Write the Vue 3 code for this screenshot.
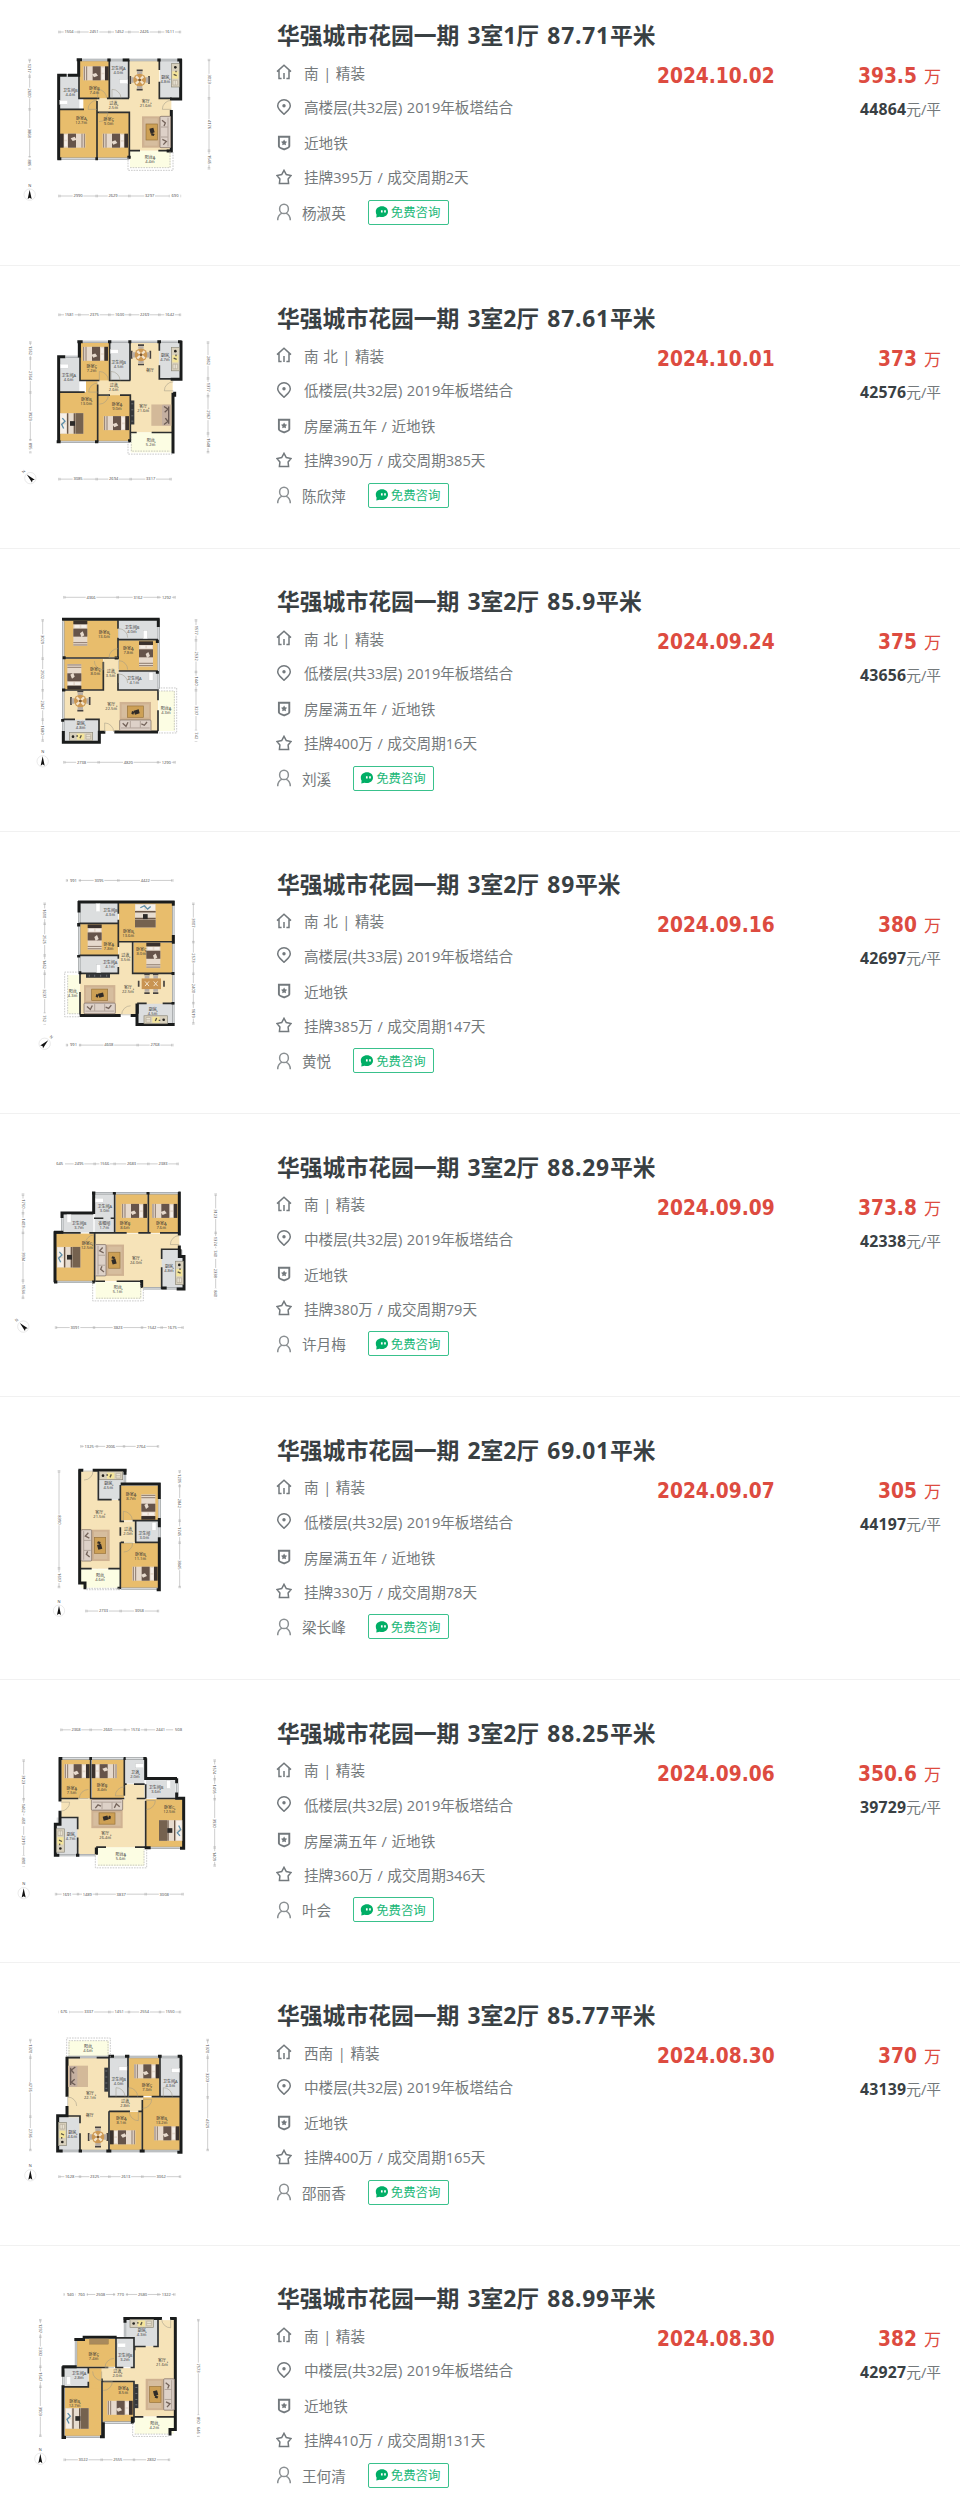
<template>
  <ul class="deal-list">
    <li v-for="(item, i) in deals" :key="i" class="deal">
      <svg class="plan" width="250" height="240" :viewBox="`0 ${-item.plan.dy} 750 720`">
        <rect
          v-for="(r, k) in item.plan.rooms"
          :key="'r' + k"
          :class="r[0]"
          :x="r[1]"
          :y="r[2]"
          :width="r[3]"
          :height="r[4]"
        />
        <path class="glass-edge" :d="item.plan.glass" />
        <path class="glass" :d="item.plan.glass" />
        <path class="thin" :d="item.plan.thin" />
        <path class="solid" :d="item.plan.solid" />
        <path class="dashed" :d="item.plan.dashed" />

        <g
          v-for="(f, k) in item.plan.items"
          :key="'f' + k"
          :transform="`translate(${f[1]} ${f[2]}) rotate(${f[3] || 0})`"
        >
          <template v-if="f[0] === 'bed'">
            <rect x="-38" y="-21" width="66" height="42" fill="#e6d9cc" />
            <path d="M-35-21v42M-28-21v42" stroke="#8d7a6c" stroke-width="3" />
            <rect x="-10" y="-21" width="24" height="42" fill="#66544a" />
            <path d="M-12 3l12-4 6 8-12 5z" fill="#e6d9cc" />
            <path d="M17-17h8v15h-8zM17 3h8v15h-8z" fill="#f5eee7" />
            <rect x="27" y="-21" width="11" height="42" fill="#3a312d" />
          </template>
          <template v-else-if="f[0] === 'big'">
            <rect x="-35" y="-31" width="70" height="62" fill="#e7dccf" />
            <rect x="-35" y="-31" width="24" height="62" fill="#75624f" />
            <path d="M-8-31v62M12-31v62" stroke="#6b5849" stroke-width="4" />
            <rect x="-10" y="-7" width="15" height="14" fill="#2c2a28" />
            <path d="M17-29h16v26h-16zM17 3h16v26h-16z" fill="#f6f0e9" />
            <path d="M24-15l6 12-10 10 8 9" stroke="#5e8ea8" stroke-width="4" fill="none" />
          </template>
          <template v-else-if="f[0] === 'lounge'">
            <rect x="-43" y="-47" width="86" height="94" fill="#cfb292" />
            <rect x="-36" y="-41" width="40" height="82" fill="#d6bd9e" />
            <rect x="-31" y="-24" width="34" height="48" fill="#cda055" stroke="#97723a" stroke-width="2" />
            <path d="M-21-10l12-3 4 14-12 4zM-14 3l9 3-3 6-8-2z" fill="#302b27" />
            <rect x="11" y="-47" width="32" height="94" rx="3" fill="#ddd1c8" stroke="#75665d" stroke-width="2" />
            <path d="M14-15h20M14 15h20M35-43v86" stroke="#9c8c82" stroke-width="2" />
            <path d="M17-35l10 8-4 9M18 22l12 6-9 10" stroke="#75655c" stroke-width="4" fill="none" />
          </template>
          <template v-else-if="f[0] === 'sofa'">
            <rect x="-30" y="-32" width="60" height="64" fill="#d3b999" />
            <rect x="2" y="-31" width="25" height="62" rx="3" fill="#c4afa0" />
            <path d="M8-26l12 8-10 9M8 28l12-9-8-10M22-26v52" stroke="#6b5b54" stroke-width="4" fill="none" />
          </template>
          <template v-else-if="f[0] === 'dining'">
            <path d="M-9-29H9M-9 29H9M-28-12v24M28-12v24" stroke="#45413f" stroke-width="5" />
            <path d="M-8-22H8M-8 22H8M-22-8V8M22-8V8" stroke="#b8afa7" stroke-width="8" />
            <circle r="19" fill="#cc9853" />
            <path d="M-11-11l8 8M11-11l-8 8M-11 11l8-8M11 11l-8-8" stroke="#f3e4cc" stroke-width="7" />
            <circle r="4" fill="#775733" />
          </template>
          <template v-else-if="f[0] === 'table'">
            <path d="M-38-9V9M38-9V9M-21-28h16M5-28h16M-21 28h16M5 28h16" stroke="#45413f" stroke-width="5" />
            <path d="M-13-24v9M13-24v9M-13 24v-9M13 24v-9" stroke="#b8afa7" stroke-width="14" />
            <rect x="-29" y="-16" width="58" height="32" fill="#c99452" />
            <path d="M-19-7l12 14M-7-7l-12 14M7-7l12 14M19-7l-12 14" stroke="#f3e4cc" stroke-width="3" />
          </template>
          <template v-else-if="f[0] === 'stove'">
            <rect x="-12" y="-35" width="24" height="70" fill="#d9d1bd" stroke="#8b8778" stroke-width="2" />
            <rect x="-9" y="-12" width="18" height="22" fill="#f4e59a" />
            <circle cx="0" cy="-24" r="4" fill="#24221e" />
            <path d="M-5-3l9 4M2-14v5" stroke="#5b5548" stroke-width="4" />
            <path d="M-7 15H7v14H-7zM0 15v14" stroke="#b3ab98" stroke-width="2" fill="#e8e2d2" />
          </template>
          <rect v-else-if="f[0] === 'wc'" x="-12" y="-6" width="24" height="12" fill="#fff" stroke="#c6c8c8" />
          <template v-else-if="f[0] === 'tv'">
            <rect x="-6" y="-36" width="12" height="72" fill="#35373a" />
            <path d="M-3-26h6M-3-8h6M-3 10h6M-3 26h6" stroke="#6d7074" stroke-width="3" />
          </template>
          <rect v-else-if="f[0] === 'desk'" x="-28" y="-8" width="56" height="16" fill="#a98a5c" stroke="#84683f" />
          <path v-else-if="f[0] === 'door'" class="door" d="M0 0V-27A27 27 0 0 1 27 0" />
          <template v-else-if="f[0] === 'north'">
            <circle r="17" fill="#fff" stroke="#d5d5d5" stroke-width="1.5" />
            <path d="M0-15L6 13 0 9-6 13z" fill="#111" />
            <text class="dim" y="-24">N</text>
          </template>
        </g>

        <text v-for="(t, k) in item.plan.labels" :key="'t' + k" class="room">
          <tspan :x="t[0]" :y="t[1]">{{ t[2] }}</tspan>
          <tspan :x="t[0]" :y="t[1] + 12">{{ t[3] }}</tspan>
        </text>

        <g v-for="(d, k) in rulers(item.plan)" :key="'d' + k" :transform="d.transform">
          <path class="rule" :d="d.path" />
          <g v-for="(m, n) in d.marks" :key="n">
            <rect :x="m.x - 16" y="-6" width="32" height="12" fill="#fff" />
            <text class="dim" :x="m.x" y="4">{{ m.text }}</text>
          </g>
        </g>
      </svg>

      <div class="info">
        <h3 class="title">
          华强城市花园一期 {{ item.type }} <span class="area">{{ item.area }}</span>平米
        </h3>
        <div class="line line-house">
          <svg class="icon" viewBox="0 0 16 16">
            <path d="M1 7.6 8 1.3l7 6.3M3 6.2v8.3h2.6M13 6.2v8.3h-2.6M8 9v6" />
          </svg>
          <span>{{ item.face }} | 精装</span>
        </div>
        <div class="line line-floor">
          <svg class="icon" viewBox="0 0 16 16">
            <path d="M8 15.3C5.5 12.6 1.7 10 1.7 6.7a6.3 5.9 0 0 1 12.6 0c0 3.3-3.8 5.9-6.3 8.6z" />
            <circle class="fill" cx="8" cy="6.8" r="1.7" />
          </svg>
          <span>{{ item.floor }}层) 2019年板塔结合</span>
        </div>
        <div class="line line-tag">
          <svg class="icon" viewBox="0 0 16 16">
            <path d="M2.9 1.8h10.4v9.4c0 1.4-3.1 2.5-5.2 3.2-2.1-.7-5.2-1.8-5.2-3.2z" stroke-width="1.9" />
            <path class="fill" d="m8.1 4.4 1 1.9 2.1.4-1.5 1.5.3 2.1-1.9-.9-1.9.9.3-2.1L5 6.7l2.1-.4z" />
          </svg>
          <span>{{ item.tag }}</span>
        </div>
        <div class="line line-deal">
          <svg class="icon" viewBox="0 0 16 16">
            <path d="m8 1.3 2.3 4.2 4.8 1-3 3.6.5 4.5H3.400l.5-4.500-3-3.600 4.800-1z" />
          </svg>
          <span>挂牌{{ item.listed }}万 / 成交周期{{ item.days }}天</span>
        </div>
        <div class="line line-agent">
          <svg class="icon pale" viewBox="0 0 16 18">
            <ellipse cx="8" cy="5.9" rx="4.4" ry="4.7" />
            <path d="M1.7 17.3c0-4 1.9-6.2 4.400-7.200M14.300 17.300c0-4-1.900-6.200-4.400-7.200" />
          </svg>
          <span class="agent">{{ item.agent }}</span>
          <a class="ask">
            <svg viewBox="0 0 14 14">
              <path d="M7 1.2c3.600 0 6 2.300 6 5.400s-2.400 5.500-6 5.500c-.9 0-1.700 0-2.400-.3L1.300 12.600l.3-2.800C1 9 .8 7.900.8 6.600.8 3.500 3.400 1.200 7 1.200z" fill="#00ae66" />
              <path d="M6.800 5.200v2.200M10 5.200v2.200" stroke="#fff" stroke-width="1.7" />
            </svg>
            免费咨询
          </a>
        </div>
      </div>

      <div class="date">{{ item.date }}</div>
      <div class="price">
        <div class="total"><b>{{ item.total }}</b> 万</div>
        <div class="unit"><b>{{ item.unit }}</b>元/平</div>
      </div>
    </li>
  </ul>
</template>

<script setup>
// rooms: [kind, x, y, w, h], items: [kind, cx, cy, angle], labels: [x, y, name, size]
// top / bottom / left / right: [offset, stops, lengths]
const plans = [
  {
    dy: 0,
    rooms: [
      ['hall', 388, 180, 90, 272], ['hall', 476, 297, 38, 155], ['hall', 290, 295, 100, 43],
      ['wood', 237, 180, 92, 115], ['tile', 330, 180, 57, 115], ['tile', 480, 180, 62, 115],
      ['tile', 178, 230, 60, 98], ['wood', 178, 328, 113, 147], ['wood', 250, 297, 41, 33],
      ['wood', 291, 337, 97, 138], ['balcony', 390, 453, 122, 50],
    ],
    glass: 'M246 180H542M182 476H388M200 226H236',
    thin: 'M237 180V295H298M328 180V295H387M386 180V295M478 180V210M478 245V295H515M178 328H252M291 303V475M291 337H388V475M390 452H420M475 452H515M321 295H335',
    solid: 'M230 179H246M236 178V230M236 226H204M200 226H176V479M172 476H184M322 180H332M368 180H388M472 180H482M532 180H546M542 178V297H510M514 330V453H500M286 476H294M382 472H392',
    dashed: 'M384 472V511H519V453M390 503H510V453',
    items: [
      ['bed', 288, 220], ['wc', 371, 245], ['dining', 419, 240], ['stove', 526, 226], ['wc', 191, 307],
      ['bed', 218, 422, 180], ['bed', 346, 422], ['lounge', 469, 396], ['door', 293, 295], ['door', 336, 295],
      ['door', 514, 328, 270], ['door', 291, 328, 270], ['door', 297, 338, 90], ['north', 89, 584],
    ],
    labels: [
      [283, 270, '卧室B', '7.4㎡'], [355, 210, '卫生间A', '4.0㎡'], [496, 236, '厨房', '4.8㎡'],
      [211, 276, '卫生间B', '4.4㎡'], [340, 315, '过道', '2.5㎡'], [437, 310, '客厅', '21.6㎡'],
      [244, 359, '卧室A', '12.7㎡'], [326, 363, '卧室C', '9.0㎡'], [450, 476, '阳台A', '4.4㎡'],
    ],
    top: [96, [178, 236, 328, 388, 478, 540], [1504, 2451, 1452, 2426, 1611]],
    bottom: [588, [178, 290, 388, 510, 540], [2990, 2629, 3297, 690]],
    left: [89, [180, 230, 328, 472, 505], [1217, 2600, 3868, 885]],
    right: [627, [180, 295, 452, 505], [3023, 4176, 1545]],
  },
  {
    dy: 21.4,
    rooms: [
      ['hall', 391, 157, 87, 270], ['hall', 476, 268, 42, 159], ['hall', 294, 270, 100, 45],
      ['wood', 240, 157, 90, 114], ['tile', 331, 157, 58, 114], ['tile', 478, 157, 64, 110],
      ['tile', 178, 200, 60, 106], ['wood', 178, 306, 115, 149], ['wood', 258, 273, 35, 35],
      ['wood', 294, 315, 97, 139], ['balcony', 392, 427, 124, 60],
    ],
    glass: 'M247 155H540M182 455H390M198 200H236',
    thin: 'M240 155V271H298M329 155V271H391M390 155V271M478 155V182M478 225V266H515M178 306H254M293 283V455M293 315H330M360 315H391V454M392 427H410M455 427H518',
    solid: 'M232 155H248M238 152V202M196 200H176V458M170 455H182M324 155H334M385 155H394M472 155H483M534 155H545M543 152V267H512M524 305V320M519 308V490M285 455H295M384 452H393',
    dashed: 'M384 453V492H517M394 430V483H510',
    items: [
      ['bed', 286, 191], ['wc', 343, 184], ['dining', 423, 194], ['stove', 526, 207], ['wc', 193, 228],
      ['big', 215, 400, 180], ['bed', 349, 399], ['tv', 397, 367], ['sofa', 484, 375], ['door', 298, 271],
      ['door', 333, 271], ['door', 520, 302, 270], ['door', 293, 306, 270], ['door', 298, 315, 90], ['north', 91, 564, 315],
    ],
    labels: [
      [275, 234, '卧室C', '7.2㎡'], [356, 223, '卫生间B', '4.5㎡'], [495, 202, '厨房', '4.7㎡'],
      [206, 261, '卫生间A', '4.6㎡'], [341, 290, '过道', '2.6㎡'], [450, 246, '餐厅', ''], [430, 355, '客厅', '21.6㎡'],
      [259, 334, '卧室B', '13.0㎡'], [351, 349, '卧室A', '9.0㎡'], [452, 455, '阳台', '5.2㎡'],
    ],
    top: [74, [178, 238, 328, 390, 478, 540], [1581, 2375, 1600, 2269, 1642]],
    bottom: [567, [178, 290, 392, 512], [3085, 2694, 3317]],
    left: [91, [157, 205, 307, 450, 486], [1262, 2764, 3929, 895]],
    right: [624, [157, 265, 318, 430, 486], [2862, 1377, 2967, 1548]],
  },
  {
    dy: 12.9,
    rooms: [
      ['hall', 190, 360, 284, 122], ['hall', 310, 263, 46, 100], ['wood', 190, 150, 164, 112],
      ['tile', 356, 150, 117, 57], ['wood', 357, 210, 116, 92], ['wood', 190, 265, 119, 94],
      ['tile', 356, 305, 117, 53], ['tile', 190, 448, 106, 65], ['balcony', 475, 362, 50, 120],
    ],
    glass: 'M190 153V515M476 170V355',
    thin: 'M354 150V175M354 202V263H312M190 263H315M354 208H474M356 302H474M310 275V359H190M354 310V359H474V390M474 420V483M190 447H225M256 447H297V485',
    solid: 'M186 147H479M475 145V170M188 262H197M186 359H196M344 263H356M472 208V218M472 302V310M188 446V454M190 482V516H298V486H316M343 485H474',
    dashed: 'M474 353H530V488H475M475 362H523V483',
    items: [
      ['bed', 241, 189, 270], ['wc', 436, 193, 90], ['bed', 438, 251, 270], ['bed', 223, 319, 90], ['wc', 453, 318, 90],
      ['dining', 241, 392], ['lounge', 406, 438, 90], ['stove', 243, 499, 270], ['door', 354, 262, 270], ['door', 356, 202],
      ['door', 356, 298], ['door', 310, 272, 180], ['door', 314, 485], ['door', 356, 338], ['north', 128, 573],
    ],
    labels: [
      [312, 190, '卧室B', '13.6㎡'], [396, 175, '卫生间B', '4.0㎡'], [385, 239, '卧室A', '7.8㎡'],
      [286, 302, '卧室C', '8.0㎡'], [332, 309, '过道', '3.5㎡'], [403, 329, '卫生间A', '4.1㎡'],
      [334, 408, '客厅', '22.5㎡'], [242, 465, '厨房', '4.8㎡'], [498, 418, '阳台A', '4.3㎡'],
    ],
    top: [81, [193, 353, 475, 524], [4366, 3162, 1292]],
    bottom: [576, [193, 296, 474, 524], [2738, 4820, 1290]],
    left: [128, [150, 265, 360, 448, 511], [3029, 2502, 2347, 1680]],
    right: [588, [150, 210, 305, 360, 482, 511], [1577, 2532, 1440, 3237, 742]],
  },
  {
    dy: 4.3,
    rooms: [
      ['hall', 239, 370, 282, 121], ['hall', 355, 275, 44, 100], ['tile', 239, 158, 116, 59],
      ['wood', 357, 158, 163, 115], ['wood', 239, 221, 115, 94], ['tile', 239, 317, 116, 50],
      ['wood', 401, 276, 119, 92], ['tile', 413, 460, 108, 60], ['balcony', 203, 374, 36, 116],
    ],
    glass: 'M238 160V370M520 166V520',
    thin: 'M355 156V190M355 208V274H520M238 219H355V290M238 315H355V325M355 350V369H240V400M398 275V369H520M398 305V320M240 425V492M414 490V459H440M488 459H522',
    solid: 'M234 155H524M237 152V186M236 218V228M520 152V166M520 254V280M236 314V321M236 367H244M519 365V374M239 495H362M392 495H411V522H524M411 459V524M519 455V462',
    dashed: 'M238 365H194V499H240M203 374V490H238',
    items: [
      ['wc', 294, 172, 90], ['big', 436, 196, 270], ['bed', 284, 260, 270], ['wc', 296, 355, 90], ['bed', 460, 315, 270],
      ['tv', 294, 376, 90], ['table', 454, 400], ['lounge', 299, 447, 90], ['stove', 467, 508, 90], ['door', 392, 493, 270],
      ['north', 134, 580, 45],
    ],
    labels: [
      [331, 184, '卫生间B', '4.3㎡'], [385, 249, '卧室B', '13.6㎡'], [326, 287, '卧室A', '7.8㎡'], [376, 320, '过道', '3.5㎡'],
      [424, 303, '卧室C', '8.0㎡'], [330, 341, '卫生间A', '4.1㎡'], [384, 415, '客厅', '22.5㎡'], [458, 481, '厨房', '4.5㎡'],
      [218, 428, '阳台', '4.3㎡'],
    ],
    top: [90, [201, 239, 355, 517], [991, 3095, 4422]],
    bottom: [584, [201, 240, 413, 517], [991, 4608, 2768]],
    left: [134, [160, 220, 315, 370, 490, 519], [1610, 2525, 1462, 3237, 752]],
    right: [580, [160, 275, 370, 458, 519], [3107, 2573, 2400, 1619]],
  },
  {
    dy: -4.3,
    rooms: [
      ['hall', 285, 309, 253, 143], ['hall', 425, 450, 60, 24], ['tile', 284, 190, 60, 118], ['wood', 347, 190, 96, 117],
      ['wood', 447, 190, 91, 117], ['tile', 190, 252, 90, 54], ['wood', 168, 309, 115, 146],
      ['tile', 485, 358, 63, 115], ['balcony', 287, 455, 138, 50],
    ],
    glass: 'M282 188H538M187 250V305M170 454H284M430 473H548',
    thin: 'M282 188V250M344 188V307M282 263H310M332 263H344M445 188V307M282 307H380M415 307H452M480 307H540M168 307H242M268 307H284V455M485 385V356H540M485 410V475M287 452H315M350 452H425V472',
    solid: 'M276 187H286M281 185V250M343 184V192M444 184V192M535 187H542M538 184V315M186 262V247H280M162 305H190M165 302V455M162 454H172M538 345V378H552V475H530M540 356V378M425 448V470M484 472H500M276 454H284',
    dashed: 'M278 453V511H430V473M288 503H422V458',
    items: [
      ['wc', 298, 209], ['bed', 403, 241], ['bed', 494, 241], ['wc', 207, 264, 90], ['big', 206, 380, 180],
      ['lounge', 329, 389, 180], ['stove', 538, 427], ['door', 538, 342, 270], ['door', 283, 340, 270], ['north', 70, 588, 315],
    ],
    labels: [
      [314, 231, '卫生间A', '3.0㎡'], [313, 283, '衣帽间', '1.7㎡'], [375, 283, '卧室B', '8.6㎡'], [484, 283, '卧室A', '7.6㎡'],
      [237, 283, '卫生间B', '3.7㎡'], [261, 343, '卧室C', '12.5㎡'], [408, 387, '客厅', '24.0㎡'], [507, 413, '厨房', '4.8㎡'],
      [353, 475, '阳台', '5.1㎡'],
    ],
    top: [100, [168, 190, 284, 344, 445, 533], [645, 2495, 1566, 2683, 2383]],
    bottom: [591, [168, 282, 426, 485, 548], [3091, 3823, 1542, 1675]],
    left: [69, [192, 248, 307, 450, 502], [1750, 1403, 3934, 1534]],
    right: [647, [192, 307, 358, 380, 476, 502], [3123, 1374, 740, 2338, 840]],
  },
  {
    dy: 17.1,
    rooms: [
      ['hall', 243, 152, 50, 292], ['hall', 290, 238, 72, 206], ['hall', 360, 302, 46, 64], ['tile', 297, 152, 77, 85],
      ['wood', 363, 195, 112, 104], ['tile', 407, 302, 68, 60], ['wood', 363, 367, 112, 135], ['balcony', 243, 446, 118, 55],
    ],
    glass: 'M375 155V190M479 234V350M363 504H478',
    thin: 'M295 152V237H335M355 237H361M361 193V302H372M398 300H480M361 320V345M362 365H372M405 365H480M407 302V365M361 365V505M243 444H275M325 444H361',
    solid: 'M235 149H250M278 149H380M375 147V162M362 190H482M478 187V235M478 292V320M478 350V507H470M239 148V487H255V506M357 498V506',
    dashed: 'M258 503H360M259 507H360',
    items: [
      ['stove', 333, 165, 270], ['bed', 445, 259, 90], ['wc', 462, 317, 90], ['lounge', 286, 374, 180], ['bed', 435, 459],
      ['door', 252, 151, 90], ['door', 370, 299], ['door', 371, 367, 90], ['north', 177, 570],
    ],
    labels: [
      [325, 193, '厨房', '4.5㎡'], [393, 226, '卧室A', '8.7㎡'], [298, 281, '客厅', '21.5㎡'], [384, 330, '过道', '2.0㎡'],
      [433, 342, '卫生间', '3.0㎡'], [421, 407, '卧室B', '11.1㎡'], [300, 469, '阳台', '4.6㎡'],
    ],
    top: [77, [244, 291, 372, 474], [1325, 2006, 2764]],
    bottom: [571, [259, 362, 474], [2733, 3058]],
    left: [177, [152, 443, 499], [8390, 1617]],
    right: [539, [152, 196, 300, 366, 499], [1205, 2842, 1745, 3845]],
  },
  {
    dy: 8.5,
    rooms: [
      ['hall', 184, 295, 250, 145], ['hall', 375, 250, 58, 50], ['hall', 235, 438, 55, 25], ['wood', 184, 176, 87, 117],
      ['wood', 276, 176, 97, 117], ['tile', 376, 176, 57, 72], ['tile', 438, 238, 89, 55], ['wood', 437, 295, 112, 146],
      ['tile', 170, 350, 62, 112], ['balcony', 293, 440, 140, 55],
    ],
    glass: 'M186 173H434M532 247V285M440 441H545M170 463H286',
    thin: 'M182 293H235M272 172V293H373M373 172V285M374 250H380M402 250H434M410 293H437M470 293H550M437 300V440M437 250V293M182 350H233V385M233 410V463M291 462V439H318M405 439H437',
    solid: 'M176 173H187M180 170V302M268 173H276M371 173H377M430 173H440M437 172V233H531M530 232V247M530 275V292H551V442H540M180 330V370H166V463H178M228 463H238M289 440V460M434 441H452',
    dashed: 'M286 465V501H440V445M294 493H432V445',
    items: [
      ['bed', 231, 211], ['bed', 313, 211, 180], ['wc', 419, 195], ['wc', 506, 251, 90], ['lounge', 321, 339, 270],
      ['big', 512, 389], ['stove', 181, 419, 180], ['door', 265, 293, 270], ['door', 373, 285, 270], ['door', 182, 304, 90],
      ['door', 439, 299, 90], ['north', 71, 577],
    ],
    labels: [
      [215, 267, '卧室A', '7.5㎡'], [306, 260, '卧室B', '8.4㎡'], [405, 221, '卫浴', '2.0㎡'], [468, 266, '卫生间B', '3.6㎡'],
      [316, 404, '客厅', '26.4㎡'], [212, 405, '厨房', '4.7㎡'], [508, 325, '卧室C', '12.5㎡'], [362, 465, '阳台A', '5.6㎡'],
    ],
    top: [87, [184, 272, 375, 437, 526, 545], [2368, 2660, 1574, 2441, 508]],
    bottom: [580, [168, 234, 290, 437, 548], [1691, 1489, 3837, 3008]],
    left: [71, [179, 295, 350, 370, 466, 494], [3123, 1462, 450, 2319, 890]],
    right: [644, [179, 235, 295, 440, 494], [1574, 1495, 3930, 1409]],
  },
  {
    dy: 30,
    rooms: [
      ['hall', 204, 204, 122, 277], ['hall', 324, 320, 102, 45], ['tile', 330, 204, 54, 114], ['wood', 387, 204, 92, 114],
      ['tile', 483, 204, 58, 114], ['wood', 330, 366, 95, 115], ['wood', 428, 322, 113, 159], ['tile', 176, 382, 62, 101],
      ['balcony', 205, 152, 122, 50],
    ],
    glass: 'M205 201H540M180 483H540',
    thin: 'M198 203H240M290 203H327V320H350M384 200V320H350M386 320H430M480 200V320M455 320H545M327 364H390M415 364H427V482M327 364V482M427 330V364M202 378H240V400M240 430V482',
    solid: 'M201 200V320M201 348V377H173V483H188M325 199H342M375 199H388M474 199H485M533 199H546M543 197V487H532M236 483H246M319 483H334M419 483H434',
    dashed: 'M200 200V144H331V202M207 201V152H324V200',
    items: [
      ['sofa', 234, 259, 180], ['tv', 319, 269], ['wc', 369, 236], ['bed', 440, 244], ['wc', 527, 241], ['stove', 187, 432, 180],
      ['dining', 294, 441], ['bed', 368, 442, 180], ['bed', 500, 430], ['door', 203, 348], ['door', 348, 320], ['door', 386, 320],
      ['door', 490, 320], ['door', 415, 365, 180], ['door', 428, 328, 90], ['north', 91, 556],
    ],
    labels: [
      [264, 173, '阳台', '4.6㎡'], [356, 274, '卫生间B', '4.0㎡'], [441, 292, '卧室C', '7.3㎡'], [511, 279, '卫生间A', '4.3㎡'],
      [270, 316, '客厅', '22.1㎡'], [375, 340, '过道', '2.8㎡'], [269, 381, '餐厅', ''], [217, 431, '厨房', '4.6㎡'],
      [364, 390, '卧室A', '8.1㎡'], [485, 390, '卧室B', '13.2㎡'],
    ],
    top: [66, [178, 205, 328, 387, 480, 540], [676, 3337, 1451, 2554, 1550]],
    bottom: [560, [178, 240, 328, 427, 540], [1628, 2325, 2613, 3062]],
    left: [91, [150, 203, 380, 480], [1370, 4776, 2736]],
    right: [623, [150, 203, 322, 480], [1370, 3203, 4329]],
  },
  {
    dy: 21.4,
    rooms: [
      ['hall', 404, 228, 121, 211], ['hall', 476, 150, 49, 90], ['hall', 305, 294, 102, 39], ['tile', 377, 150, 96, 78],
      ['wood', 230, 206, 117, 84], ['tile', 350, 204, 52, 87], ['tile', 194, 294, 71, 55], ['wood', 195, 350, 110, 150],
      ['wood', 266, 294, 39, 60], ['wood', 309, 336, 92, 120], ['balcony', 404, 441, 118, 50],
    ],
    glass: 'M375 152V200M228 210V290M190 300V350M190 500H310M310 457H400',
    thin: 'M474 148V229H460M437 229H404V240M347 203H402V292H392M348 203V292H370M192 292H325M265 292V310M265 335V350H192M306 325V500M307 334H402V457M404 440H430M470 440H525',
    solid: 'M370 145H486M510 145H530M526 143V478H510V496M375 145V158M248 201H350M223 208H255M187 290H230M189 288V320M189 345V502H198M300 500H310V456M397 440V460M186 501H196',
    dashed: 'M398 460V499H505M404 492H506',
    items: [
      ['stove', 425, 160, 270], ['desk', 297, 214], ['wc', 365, 225], ['wc', 206, 332, 90], ['big', 231, 445, 180],
      ['bed', 360, 413], ['tv', 409, 378], ['lounge', 480, 373], ['door', 512, 146, 180], ['door', 342, 292, 270],
      ['door', 305, 304, 180], ['door', 310, 334, 90], ['north', 121, 566],
    ],
    labels: [
      [425, 185, '厨房', '4.3㎡'], [281, 258, '卧室C', '7.4㎡'], [375, 260, '卫生间B', '3.2㎡'], [486, 277, '客厅', '21.6㎡'],
      [237, 314, '卫生间A', '2.8㎡'], [352, 310, '过道', '2.0㎡'], [370, 360, '卧室A', '8.5㎡'], [224, 399, '卧室B', '12.7㎡'],
      [463, 465, '阳台', '4.2㎡'],
    ],
    top: [73, [194, 228, 260, 343, 380, 475, 523], [940, 760, 2508, 770, 2580, 1322]],
    bottom: [569, [194, 305, 402, 507], [3022, 2555, 2832]],
    left: [121, [150, 200, 290, 350, 497], [1297, 2332, 1547, 3903]],
    right: [595, [150, 437, 465, 497], [7573, 850, 646]],
  },
]

const rows = [
  ['3室1厅', '87.71', '南', '高楼层(共32', '近地铁', 395, 2, '杨淑英', '2024.10.02', '393.5', 44864],
  ['3室2厅', '87.61', '南 北', '低楼层(共32', '房屋满五年 / 近地铁', 390, 385, '陈欣萍', '2024.10.01', '373', 42576],
  ['3室2厅', '85.9', '南 北', '低楼层(共33', '房屋满五年 / 近地铁', 400, 16, '刘溪', '2024.09.24', '375', 43656],
  ['3室2厅', '89', '南 北', '高楼层(共33', '近地铁', 385, 147, '黄悦', '2024.09.16', '380', 42697],
  ['3室2厅', '88.29', '南', '中楼层(共32', '近地铁', 380, 79, '许月梅', '2024.09.09', '373.8', 42338],
  ['2室2厅', '69.01', '南', '低楼层(共32', '房屋满五年 / 近地铁', 330, 78, '梁长峰', '2024.09.07', '305', 44197],
  ['3室2厅', '88.25', '南', '低楼层(共32', '房屋满五年 / 近地铁', 360, 346, '叶会', '2024.09.06', '350.6', 39729],
  ['3室2厅', '85.77', '西南', '中楼层(共32', '近地铁', 400, 165, '邵丽香', '2024.08.30', '370', 43139],
  ['3室2厅', '88.99', '南', '中楼层(共32', '近地铁', 410, 131, '王何清', '2024.08.30', '382', 42927],
]

const deals = rows.map((r, i) => {
  const [type, area, face, floor, tag, listed, days, agent, date, total, unit] = r
  return { type, area, face, floor, tag, listed, days, agent, date, total, unit, plan: plans[i] }
})

function rulers(plan) {
  return ['top', 'bottom', 'left', 'right'].map((side) => {
    const [offset, stops, lengths] = plan[side]
    const vertical = side === 'left' || side === 'right'
    return {
      transform: vertical ? `translate(${offset} 0) rotate(90)` : `translate(0 ${offset})`,
      path: `M${stops[0]} 0H${stops[stops.length - 1]}` + stops.map((s) => `M${s - 2}-4v8M${s + 2}-4v8`).join(''),
      marks: lengths.map((text, n) => ({ text, x: (stops[n] + stops[n + 1]) / 2 })),
    }
  })
}
</script>

<style>
body {
  background: #fff;
}
</style>

<style scoped>
.deal-list {
  width: 960px;
  height: 2508px;
  margin: 0;
  padding: 0;
  overflow: hidden;
  list-style: none;
  background: #fff;
  font-family: 'Open Sans', 'Noto Sans CJK SC', sans-serif;
  color: #74797b;
}

.deal {
  display: flex;
  box-sizing: border-box;
  height: 282.86px;
  padding: 17.36px 19px 0 0;
  border-bottom: 1px solid #f1f1f1;
}

.deal:first-child {
  height: 265.9px;
  padding-top: 0;
}

.deal:last-child {
  border-bottom: 0;
}

/* 户型图 */
.plan {
  flex: none;
  display: block;
  margin-right: 26px;
}

.wood {
  fill: #e8bd6c;
}

.tile {
  fill: #dcdedf;
}

.hall {
  fill: #f6e3b8;
}

.balcony {
  fill: #fcfde3;
}

.solid,
.thin,
.glass,
.glass-edge,
.dashed,
.door,
.rule {
  fill: none;
}

.solid {
  stroke: #1a1c1c;
  stroke-width: 9;
}

.thin {
  stroke: #2c2e2e;
  stroke-width: 5;
}

.glass-edge {
  stroke: #989c9e;
  stroke-width: 7;
}

.glass {
  stroke: #dfe2e4;
  stroke-width: 3;
}

.dashed {
  stroke: #b0b0b0;
  stroke-width: 2;
  stroke-dasharray: 5 3;
}

.door {
  stroke: #9d9785;
  stroke-width: 1.5;
}

.room,
.dim {
  font-size: 12px;
  text-anchor: middle;
}

.room {
  fill: #333;
}

.dim {
  fill: #444;
}

.rule {
  stroke: #a8a8a8;
  stroke-width: 1.7;
}

/* 房源信息 */
.info {
  flex: 1;
  padding-top: 16px;
}

.title {
  height: 39px;
  margin: 0 0 0 1px;
  font-size: 22.8px;
  line-height: 40px;
  font-weight: 700;
  color: #394043;
  word-spacing: 2.2px;
  white-space: nowrap;
}

.area {
  letter-spacing: 0.8px;
}

.line {
  display: flex;
  align-items: center;
  font-size: 14.6px;
  word-spacing: 0.8px;
  white-space: nowrap;
}

.line-house {
  height: 34px;
}

.line-floor {
  height: 35px;
}

.line-tag {
  height: 37px;
}

.line-deal {
  height: 31px;
}

.line-agent {
  height: 40px;
}

.icon {
  flex: none;
  width: 16px;
  height: 16px;
  margin-right: 12px;
  fill: none;
  stroke: #73797d;
  stroke-width: 1.5;
}

.icon .fill {
  fill: #73797d;
  stroke: none;
}

.pale {
  height: 18px;
  margin-right: 10px;
  stroke: #8b9093;
}

.agent {
  margin-right: 22px;
}

.ask {
  display: flex;
  align-items: center;
  box-sizing: border-box;
  width: 81px;
  height: 25px;
  padding-left: 6px;
  border: 1px solid #39c18c;
  border-radius: 2px;
  font-size: 12.4px;
  color: #19b777;
}

.ask svg {
  width: 14px;
  height: 14px;
  margin-right: 2px;
}

.date {
  width: 180px;
  padding-top: 60px;
  font: 700 20.7px/32px 'DejaVu Sans Condensed', 'DejaVu Sans', sans-serif;
  font-stretch: condensed;
  color: #dd4b40;
}

.price {
  width: 104px;
  padding-top: 60px;
  text-align: right;
  white-space: nowrap;
}

.total {
  height: 32px;
  font-size: 17.1px;
  line-height: 32px;
  word-spacing: 2.6px;
  color: #dd4b40;
}

.total b {
  font-family: 'DejaVu Sans Condensed', 'DejaVu Sans', sans-serif;
  font-stretch: condensed;
  font-size: 20.7px;
}

.unit {
  height: 36px;
  font-size: 14.7px;
  line-height: 35px;
}

.unit b {
  font-size: 15.8px;
  letter-spacing: 0.2px;
  color: #394043;
}
</style>
